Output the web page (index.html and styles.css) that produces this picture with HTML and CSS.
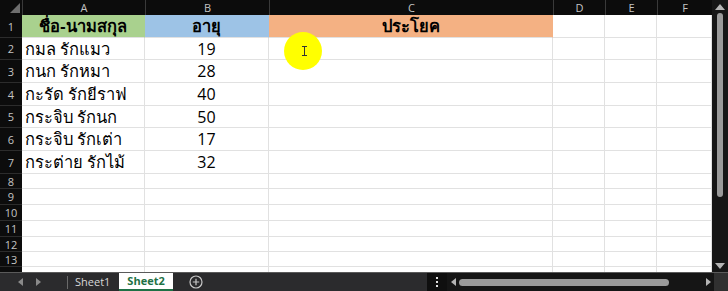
FILE: index.html
```html
<!DOCTYPE html>
<html lang="th">
<head>
<meta charset="utf-8">
<title>Sheet2</title>
<link rel="stylesheet" href="styles.css">
</head>
<body>
<div class="app">
  <div class="main">
    <div class="sheet">
      <div class="row colhead">
        <div class="corner"><span class="tri"></span></div>
        <div class="ch">A</div><div class="ch">B</div><div class="ch">C</div><div class="ch">D</div><div class="ch">E</div><div class="ch">F</div>
      </div>
      <div class="row h23">
        <div class="rh">1</div>
        <div class="c hd green">ชื่อ-นามสกุล</div><div class="c hd blue">อายุ</div><div class="c hd orange">ประโยค</div><div class="c"></div><div class="c"></div><div class="c"></div>
      </div>
      <div class="row h22">
        <div class="rh">2</div>
        <div class="c name">กมล รักแมว</div><div class="c num">19</div><div class="c"></div><div class="c"></div><div class="c"></div><div class="c"></div>
      </div>
      <div class="row h23">
        <div class="rh">3</div>
        <div class="c name">กนก รักหมา</div><div class="c num">28</div><div class="c"></div><div class="c"></div><div class="c"></div><div class="c"></div>
      </div>
      <div class="row h23">
        <div class="rh">4</div>
        <div class="c name">กะรัด รักยีราฟ</div><div class="c num">40</div><div class="c"></div><div class="c"></div><div class="c"></div><div class="c"></div>
      </div>
      <div class="row h22">
        <div class="rh">5</div>
        <div class="c name">กระจิบ รักนก</div><div class="c num">50</div><div class="c"></div><div class="c"></div><div class="c"></div><div class="c"></div>
      </div>
      <div class="row h23">
        <div class="rh">6</div>
        <div class="c name">กระจิบ รักเต่า</div><div class="c num">17</div><div class="c"></div><div class="c"></div><div class="c"></div><div class="c"></div>
      </div>
      <div class="row h23">
        <div class="rh">7</div>
        <div class="c name">กระต่าย รักไม้</div><div class="c num">32</div><div class="c"></div><div class="c"></div><div class="c"></div><div class="c"></div>
      </div>
      <div class="row h15">
        <div class="rh">8</div>
        <div class="c"></div><div class="c"></div><div class="c"></div><div class="c"></div><div class="c"></div><div class="c"></div>
      </div>
      <div class="row h16">
        <div class="rh">9</div>
        <div class="c"></div><div class="c"></div><div class="c"></div><div class="c"></div><div class="c"></div><div class="c"></div>
      </div>
      <div class="row h16">
        <div class="rh">10</div>
        <div class="c"></div><div class="c"></div><div class="c"></div><div class="c"></div><div class="c"></div><div class="c"></div>
      </div>
      <div class="row h16">
        <div class="rh">11</div>
        <div class="c"></div><div class="c"></div><div class="c"></div><div class="c"></div><div class="c"></div><div class="c"></div>
      </div>
      <div class="row h15">
        <div class="rh">12</div>
        <div class="c"></div><div class="c"></div><div class="c"></div><div class="c"></div><div class="c"></div><div class="c"></div>
      </div>
      <div class="row h15">
        <div class="rh">13</div>
        <div class="c"></div><div class="c"></div><div class="c"></div><div class="c"></div><div class="c"></div><div class="c"></div>
      </div>
      <div class="row h15">
        <div class="rh"></div>
        <div class="c"></div><div class="c"></div><div class="c"></div><div class="c"></div><div class="c"></div><div class="c"></div>
      </div>
    </div>
    <div class="vscroll">
      <span class="arrow up"></span>
      <div class="vtrack"><div class="vthumb"></div></div>
      <span class="arrow down"></span>
    </div>
  </div>
  <div class="bottombar">
    <div class="tabs">
      <div class="nav"><span class="arrow left"></span><span class="arrow right"></span></div>
      <span class="divider"></span>
      <span class="tab">Sheet1</span>
      <span class="tab active">Sheet2</span>
      <span class="add">
        <svg width="14" height="14" viewBox="0 0 14 14"><circle cx="7" cy="7" r="6" fill="none" stroke="#c8c8c8" stroke-width="1.2"/><path d="M7 3.8v6.4M3.8 7h6.4" stroke="#c8c8c8" stroke-width="1.2"/></svg>
      </span>
    </div>
    <div class="grip"><i></i><i></i><i></i></div>
    <div class="htrack">
      <span class="arrow left"></span>
      <div class="hthumb"></div>
      <span class="arrow right"></span>
    </div>
    <div class="sizer"></div>
  </div>
  <div class="spot"><span class="ibeam"></span></div>
</div>
</body>
</html>
```
FILE: styles.css
```css
* { box-sizing: border-box; margin: 0; padding: 0; }
html, body { width: 728px; height: 291px; overflow: hidden; background: #0c0c0c; }
body { font-family: "Noto Sans", "DejaVu Sans", sans-serif; }

.app { position: relative; width: 728px; height: 291px; display: flex; flex-direction: column; }

.main { display: flex; height: 272px; overflow: hidden; }
.sheet { width: 712px; display: flex; flex-direction: column; background: #fff; overflow: hidden; }

.row { display: grid; grid-template-columns: 22px 123px 124px 284px 52px 52px 55px; flex: none; }
.colhead { height: 15px; background: #0c0c0c; }
.h23 { height: 23px; }
.h22 { height: 22px; }
.h16 { height: 16px; }
.h15 { height: 15px; }

.corner { position: relative; background: #0c0c0c; }
.tri { position: absolute; right: 2px; bottom: 2px; width: 0; height: 0; border-left: 10px solid transparent; border-bottom: 10px solid #6e6e6e; }

.ch { color: #c4c4c4; font-family: "Open Sans", sans-serif; font-size: 11px; line-height: 15px; text-align: center; border-left: 1px solid #3a3a3a; }

.rh { background: #0c0c0c; color: #c4c4c4; font-family: "Open Sans", sans-serif; font-size: 11px; display: flex; align-items: center; justify-content: center; border-bottom: 1px solid #2c2c2c; overflow: hidden; }

.c { border-right: 1px solid #e1e1e1; border-bottom: 1px solid #e1e1e1; color: #000; font-size: 16.5px; display: flex; align-items: center; overflow: hidden; white-space: nowrap; }
.name { padding-left: 3px; }
.num { justify-content: center; font-family: "Open Sans", sans-serif; font-size: 16px; }
.hd { justify-content: center; font-weight: bold; border-right-color: transparent; }
.green { background: #a9d18e; }
.blue { background: #9dc3e6; }
.orange { background: #f4b183; }

.vscroll { width: 16px; background: #161616; display: flex; flex-direction: column; align-items: center; padding: 2px 0; }
.vtrack { flex: 1; width: 100%; display: flex; justify-content: center; padding-top: 3px; }
.vthumb { width: 6px; height: 184px; border-radius: 3px; background: #9a9a9a; }

.arrow { display: block; width: 0; height: 0; }
.arrow.up { border-left: 5px solid transparent; border-right: 5px solid transparent; border-bottom: 6px solid #b4b4b4; margin-top: 2px; }
.arrow.down { border-left: 5px solid transparent; border-right: 5px solid transparent; border-top: 6px solid #b4b4b4; margin-bottom: 1px; }
.arrow.left { border-top: 4px solid transparent; border-bottom: 4px solid transparent; border-right: 5px solid #a0a0a0; }
.arrow.right { border-top: 4px solid transparent; border-bottom: 4px solid transparent; border-left: 5px solid #a0a0a0; }

.bottombar { height: 19px; display: flex; align-items: stretch; background: #2b2b2d; border-top: 1px solid #5a5a5a; }
.tabs { width: 427px; display: flex; align-items: center; }
.nav { display: flex; align-items: center; gap: 13px; padding-left: 18px; width: 65px; }
.nav .arrow { border-right-color: #8a8a8a; border-left-color: #8a8a8a; }
.nav .arrow.left { border-left: 0; }
.nav .arrow.right { border-right: 0; }
.divider { width: 1px; height: 13px; background: #6a6a6a; margin-left: 2px; }
.tab { font-family: "Open Sans", sans-serif; font-size: 11px; color: #d8d8d8; padding: 0 7px; line-height: 18px; }
.tab.active { background: #fff; color: #1e7145; font-weight: bold; height: 18px; border-bottom: 2px solid #1e7145; margin-left: 2px; padding: 0 8px; line-height: 16px; }
.add { display: flex; margin-left: 16px; }

.grip { width: 20px; background: #0f0f0f; display: flex; flex-direction: column; align-items: center; justify-content: center; gap: 2px; }
.grip i { display: block; width: 2px; height: 2px; background: #e0e0e0; }

.htrack { width: 267px; background: #151515; display: flex; align-items: center; padding: 0 3px 0 4px; }
.hthumb { width: 210px; height: 7px; border-radius: 4px; background: #9a9a9a; margin-left: 3px; }
.htrack .arrow.right { margin-left: auto; border-left-color: #b4b4b4; }
.htrack .arrow.left { border-right-color: #b4b4b4; }
.sizer { flex: 1; background: #303030; }

.spot { position: absolute; left: 284px; top: 32px; width: 38px; height: 38px; border-radius: 50%; background: #ffff00; display: flex; align-items: center; justify-content: center; }
.ibeam { display: block; width: 5px; height: 10px; border-top: 1px solid #333; border-bottom: 1px solid #333; position: relative; margin-left: 2px; }
.ibeam::after { content: ""; position: absolute; left: 2px; top: 0; bottom: 0; width: 1px; background: #333; }
```
